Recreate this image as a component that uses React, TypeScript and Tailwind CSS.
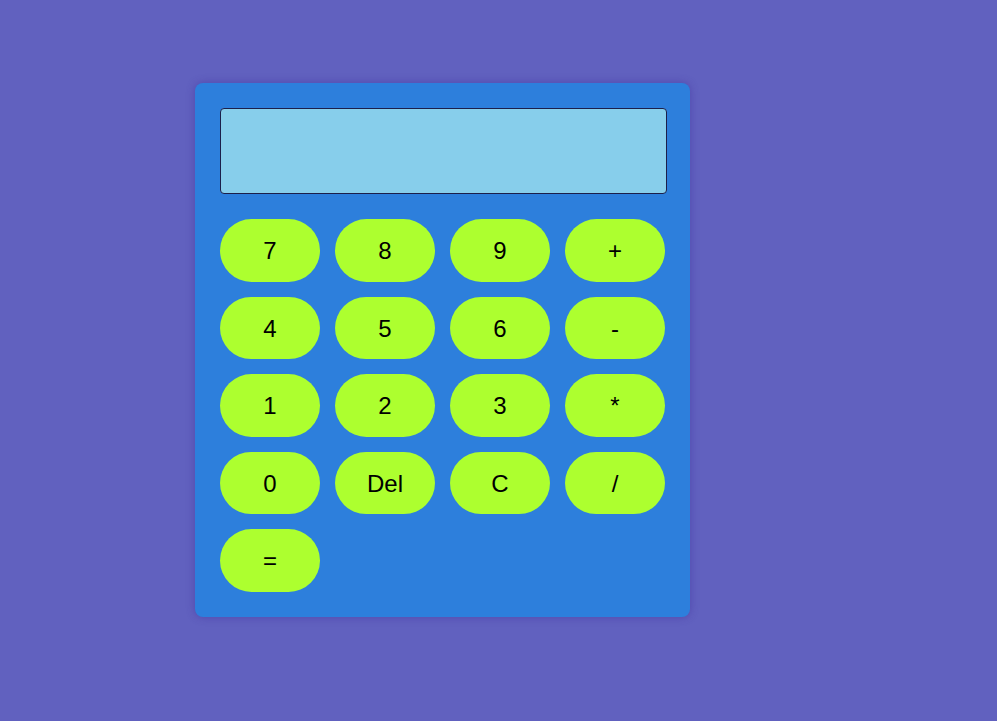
const keys = ["7", "8", "9", "+", "4", "5", "6", "-", "1", "2", "3", "*", "0", "Del", "C", "/", "="];

export default function App() {
    return (
        <div className="min-h-screen w-full bg-[#6161bf] pl-[195px] pt-[83px] font-['Liberation_Sans',Arial,sans-serif]">
            <div className="w-[495px] rounded-lg bg-[#2d7fdc] p-[25px] shadow-[0_0_8px_rgba(60,40,150,0.45)]">
                <div className="h-[86px] w-[447px] rounded-[4px] border border-[#1c1f4a] bg-[#87ceeb]" />
                <div className="mt-[25px] grid grid-cols-[repeat(4,100px)] gap-x-[15px] gap-y-[15px]">
                    {keys.map((k) => (
                        <button
                            key={k}
                            className="flex h-[62.5px] w-[100px] items-center justify-center rounded-full bg-[#adff2f] pt-[2px] text-[24px] text-black"
                        >
                            {k}
                        </button>
                    ))}
                </div>
            </div>
        </div>
    );
}
